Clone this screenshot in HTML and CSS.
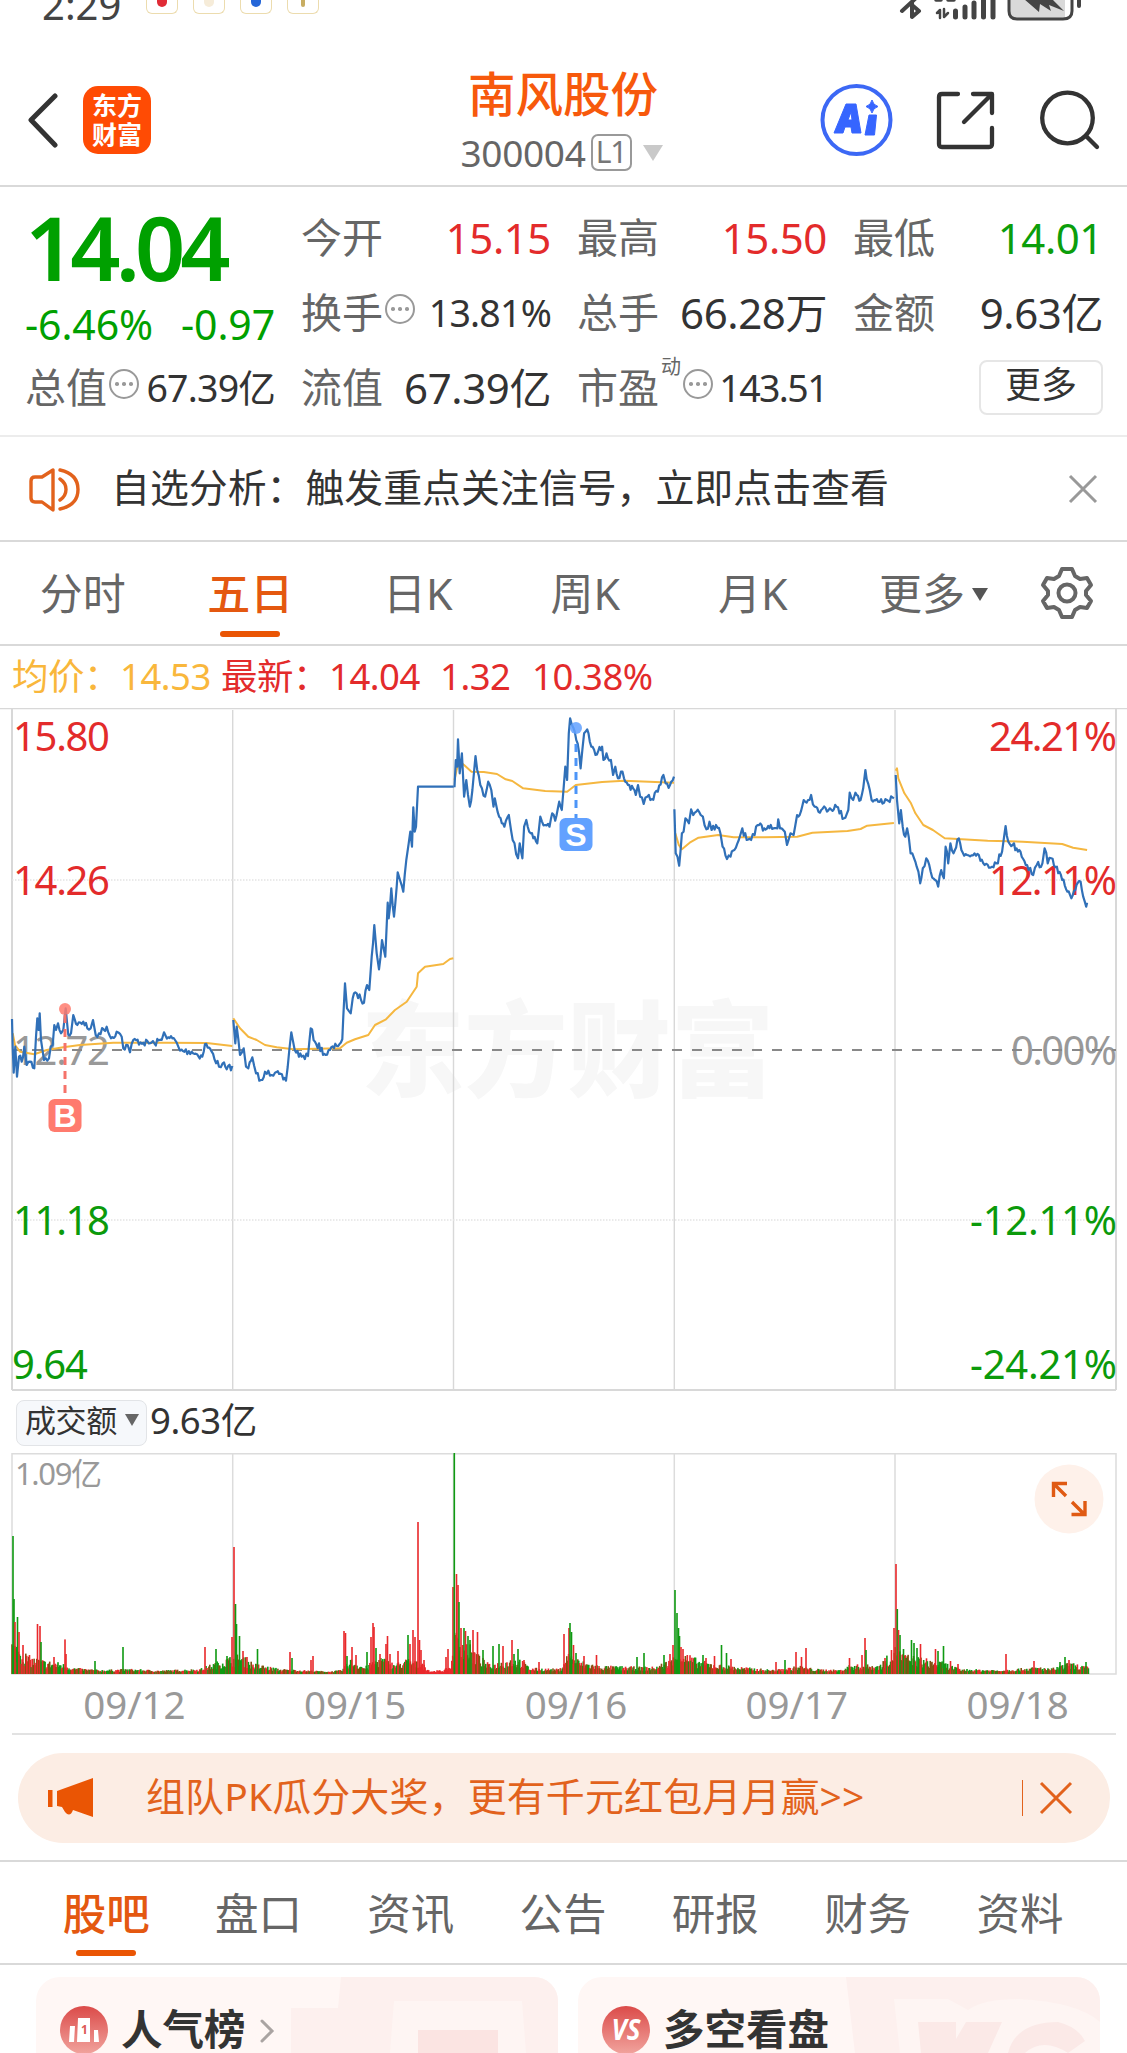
FILE: index.html
```html
<!DOCTYPE html>
<html lang="zh-CN">
<head>
<meta charset="utf-8">
<title>南风股份 300004</title>
<link rel="stylesheet" href="styles.css">
</head>
<body>
<div class="status">
  <span class="clock">2:29</span>
  <span class="notes"><i class="note red"></i><i class="note pale"></i><i class="note blue"></i><i class="note gold"></i></span>
  <svg class="status-icons" width="190" height="24" viewBox="895 0 190 24">
    <g fill="none" stroke="#444" stroke-width="4" stroke-linecap="round" stroke-linejoin="round">
      <path d="M902 11l14-13M912 5l7 6-7 6V3"/>
      <path d="M936 0h5M948 0h6" stroke-width="3.500"/>
      <path d="M940 18V10l-3 3M944 9v8l4-4" stroke-width="2.500"/>
      <path d="M955.500 17v-6M965 17V7M974 17V3M983.500 17v-20M993 17v-20" stroke-width="5"/>
    </g>
    <path d="M1009-5h56v24h-50q-6 0-6-6z" fill="#d9d9d9"/>
    <path d="M1009-6v17q0 8 8 8h46q9 0 9-8V-6" fill="none" stroke="#444" stroke-width="3"/>
    <path d="M1024-1h28l12 12-15-6 2 6-11-7-1 8z" fill="#444"/>
    <path d="M1079-3v9" stroke="#444" stroke-width="4" stroke-linecap="round"/>
  </svg>
</div>

<header class="header">
  <div class="header-left">
    <svg width="32" height="56" viewBox="0 0 32 56"><path d="M28 4L4 28l24 25" fill="none" stroke="#333" stroke-width="5" stroke-linecap="round" stroke-linejoin="round"/></svg>
    <span class="logo">东方<br>财富</span>
  </div>
  <div class="title">
    <h1>南风股份</h1>
    <p><span class="code">300004</span><span class="level">L1</span><i class="caret"></i></p>
  </div>
  <div class="header-right">
    <svg width="74" height="74" viewBox="819 82 74 74">
      <circle cx="856.500" cy="119" r="34" fill="none" stroke="#3c68f5" stroke-width="4"/>
      <path d="M846 103h10l5 29h-9l-1-6h-6l-2 6h-9zM848 119h4l-1-8zM869 114h7.500l-2 20H865zM872 99q1 5 6 6.500-5 1.500-6 6.500-1-5-6-6.500 5-1.500 6-6.500z" fill="#3665ff" fill-rule="evenodd" stroke="#3665ff" stroke-linejoin="round"/>
    </svg>
    <svg width="60" height="60" viewBox="935 89 60 60"><path d="M957 93h-16q-3 0-3 3v47q0 3 3 3h47q3 0 3-3v-16M972 93h19v19M990 94l-27 27" fill="none" stroke="#333" stroke-width="4.300" stroke-linecap="round" stroke-linejoin="round"/></svg>
    <svg width="62" height="62" viewBox="1038 88 62 62"><g fill="none" stroke="#333" stroke-width="4.300" stroke-linecap="round"><circle cx="1066.500" cy="117" r="25.300"/><path d="M1085 135l11 11"/></g></svg>
  </div>
</header>

<section class="quote">
  <div class="last">
    <strong>14.04</strong>
    <div class="change"><span>-6.46%</span><span>-0.97</span></div>
  </div>
  <div class="cell"><span class="label">今开</span><b class="up">15.15</b></div>
  <div class="cell"><span class="label">最高</span><b class="up">15.50</b></div>
  <div class="cell"><span class="label">最低</span><b class="down">14.01</b></div>
  <div class="cell"><span class="label">换手</span><i class="dots"></i><b class="small">13.81%</b></div>
  <div class="cell"><span class="label">总手</span><b>66.28万</b></div>
  <div class="cell"><span class="label">金额</span><b>9.63亿</b></div>
  <div class="cell first"><span class="label">总值</span><i class="dots"></i><b class="small">67.39亿</b></div>
  <div class="cell"><span class="label">流值</span><b>67.39亿</b></div>
  <div class="cell"><span class="label">市盈</span><sup>动</sup><i class="dots"></i><b class="small tight">143.51</b></div>
  <div class="cell"><button class="more">更多</button></div>
</section>

<section class="notice">
  <svg width="54" height="46" viewBox="28 465 54 46"><g fill="none" stroke="#e2621c" stroke-width="3.400" stroke-linejoin="round" stroke-linecap="round"><path d="M53 469v40l-11-8h-7q-4 0-4-4v-17q0-4 4-4h7z"/><path d="M60 478q6 4 6 10.500t-6 10.500M60 469q18 4 18 19.500T60 508"/></g></svg>
  <p>自选分析：触发重点关注信号，立即点击查看</p>
  <svg width="32" height="32" viewBox="0 0 32 32"><path d="M3 3l26 26M29 3L3 29" stroke="#999" stroke-width="3"/></svg>
</section>

<nav class="periods">
  <span>分时</span><span class="on">五日</span><span>日K</span><span>周K</span><span>月K</span><span class="drop">更多<i></i></span>
  <svg width="54" height="54" viewBox="-27 -27 54 54"><g fill="none" stroke="#666" stroke-width="4" stroke-linejoin="round"><path d="M-5-24H5L8-17 13-14 20-15 24-8 19-2V2L24 8 20 15 13 14 8 17 5 24H-5L-8 17-13 14-20 15-24 8-19 2V-2L-24-8-20-15-13-14-8-17Z"/><circle r="8.500"/></g></svg>
</nav>

<div class="summary"><span class="avg">均价：</span><span class="avg n1">14.53</span><span>最新：</span><span class="n2">14.04</span><span class="n3">1.32</span><span class="n4">10.38%</span></div>

<svg class="price" width="1127" height="684" viewBox="0 0 1127 684">
  <text class="watermark" x="361" y="381" textLength="413" lengthAdjust="spacingAndGlyphs">东方财富</text>
  <g stroke="#d8d8d8" stroke-width="2" fill="none">
    <path d="M0 .5H1127" stroke-width="1.500"/>
    <path d="M12 1V682M1116 1V682M12 682H1116" />
    <path d="M232.700 2V682M453.500 2V682M674.300 2V682M895 2V682" stroke-width="1.400"/>
    <path d="M12 172H1116M12 512H1116" stroke="#e4e4e4" stroke-width="1.300" stroke-dasharray="1.500 1.500"/>
  </g>
  <g class="axis">
    <g class="rise"><text x="13" y="43" textLength="97">15.80</text><text x="13" y="187" textLength="97">14.26</text></g>
    <text x="13" y="357" textLength="97">12.72</text>
    <g class="fall"><text x="13" y="527" textLength="97">11.18</text><text x="12" y="671" textLength="76">9.64</text></g>
    <g class="rise"><text x="989" y="43" textLength="128">24.21%</text><text x="989" y="187" textLength="128">12.11%</text></g>
    <text x="1011" y="357" textLength="106">0.00%</text>
    <g class="fall"><text x="970" y="527" textLength="147">-12.11%</text><text x="970" y="671" textLength="147">-24.21%</text></g>
  </g>
  <path d="M12 342H1116" stroke="#888" stroke-width="2" stroke-dasharray="10 10"/>
  <g id="averages" fill="none" stroke="#f5b740" stroke-width="2" stroke-linejoin="round"></g>
  <g id="prices" fill="none" stroke="#3070b8" stroke-width="2.200" stroke-linejoin="round"></g>
  <g class="mark-buy">
    <circle cx="65" cy="301" r="6" opacity=".85"/><path d="M65 307V390" stroke-width="3" stroke-dasharray="8 6"/>
    <rect x="48.500" y="391" width="33" height="33" rx="6"/><text x="65" y="419">B</text>
  </g>
  <g class="mark-sell">
    <circle cx="576" cy="20" r="6" opacity=".85"/><path d="M576 36V110" stroke-width="3" stroke-dasharray="8 6"/>
    <rect x="559.500" y="110" width="33" height="33" rx="6"/><text x="576" y="138">S</text>
  </g>
</svg>

<div class="turnover"><span class="picker">成交额<i></i></span><span>9.63亿</span></div>

<div class="volume">
  <svg width="1127" height="224" viewBox="0 0 1127 224">
    <path d="M12 .7H1116V221H12ZM232.700 1V221M453.500 1V221M674.300 1V221M895 1V221" fill="none" stroke="#dcdcdc" stroke-width="1.500"/>
    <text class="peak" x="15" y="32" textLength="87">1.09亿</text>
    <g id="bars"></g>
  </svg>
  <svg class="expand" width="70" height="70" viewBox="0 0 70 70"><circle cx="35" cy="35" r="34.500" fill="#fef1ea"/><path d="M19.500 33V19.500H33M20 20l12 12M51 37v13.500H37.500M50 50L38 38" fill="none" stroke="#e05a13" stroke-width="3.400"/></svg>
</div>
<div class="dates"><span>09/12</span><span>09/15</span><span>09/16</span><span>09/17</span><span>09/18</span></div>

<div class="promo">
  <svg width="48" height="42" viewBox="0 0 48 42"><path d="M0 13h4.500v17H0zM9 14L45 1v39L25 33q-3 8-8 2l-3-5-5-1z" fill="#ea5504"/></svg>
  <p>组队PK瓜分大奖，更有千元红包月月赢&gt;&gt;</p>
  <i></i>
  <svg class="close" width="34" height="34" viewBox="0 0 34 34"><path d="M2 2l30 30M32 2L2 32" stroke="#e2621c" stroke-width="3"/></svg>
</div>

<nav class="sections"><span class="on">股吧</span><span>盘口</span><span>资讯</span><span>公告</span><span>研报</span><span>财务</span><span>资料</span></nav>

<div class="cards">
  <div class="card">
    <svg class="card-art" width="522" height="76" viewBox="0 0 522 76"><path d="M305 0H522V76H255V31H302Z" fill="#fdf0ee"/><path d="M358 24H486L490 76H354Z" fill="#fef5f3"/><path d="M382 53H462V76H382Z" fill="#fbe4e2"/></svg>
    <svg class="badge" width="48" height="48" viewBox="0 0 48 48"><circle cx="24" cy="24" r="24" fill="url(#glow)"/><path d="M10 20h5l-1 16H9zM18 12h12v24H17zM34 24h4l1 12h-5z" fill="#fff"/><text x="21" y="28" class="one">1</text></svg>
    <h2>人气榜</h2>
    <svg class="arrow" width="16" height="26" viewBox="0 0 16 26"><path d="M3 3l10 10L3 23" fill="none" stroke="#aaa4a2" stroke-width="3" stroke-linecap="round"/></svg>
  </div>
  <div class="card">
    <svg class="card-art" width="522" height="76" viewBox="0 0 522 76"><path d="M268 0H522V76H277Z" fill="#fdf0ee"/><path d="M316 22H370L390 33Q405 22 440 22 500 25 522 45V76H322Z" fill="#fef5f3"/><path d="M340 45H378V62L388 45H424L410 76H343ZM430 76Q438 45 480 45 500 50 507 64L490 76Q465 60 447 76Z" fill="#fbe9e7"/></svg>
    <svg class="badge" width="48" height="48" viewBox="0 0 48 48"><circle cx="24" cy="24" r="24" fill="url(#glow)"/><text x="24" y="34" class="vs" textLength="29" lengthAdjust="spacingAndGlyphs">VS</text></svg>
    <h2>多空看盘</h2>
  </div>
</div>
<svg class="defs" width="0" height="0"><linearGradient id="glow" x1="0" y1="0" x2="0" y2="1"><stop offset="0" stop-color="#db4b49"/><stop offset="1" stop-color="#f1a39d"/></linearGradient></svg>
<script src="chart.js"></script>
</body>
</html>
```
FILE: styles.css
```css
* { box-sizing: border-box; margin: 0; padding: 0; }
body { width: 1127px; height: 2053px; overflow: hidden; background: #fff; color: #333; font-family: "Noto Sans", "Noto Sans CJK SC", sans-serif; }
svg { display: block; flex: none; }
i { font-style: normal; }
b { font-weight: 400; }

.status { height: 60px; display: flex; }
.clock { width: 104px; margin-left: 42px; font-size: 40px; line-height: 10px; color: #444; white-space: nowrap; }
.notes { display: flex; gap: 15px; }
.note { width: 32px; height: 14px; border: 1.5px solid #ecdcae; border-top: 0; border-radius: 0 0 6px 6px; display: flex; justify-content: center; }
.notes { flex: none; }
.note::before { content: ""; width: 10px; height: 7px; border-radius: 0 0 5px 5px; background: #f6ecd9; }
.note.red::before { background: #e02b36; }
.note.blue::before { background: #2566d8; }
.note.gold::before { width: 4px; background: #c8ad62; }
.status-icons { margin-left: auto; margin-right: 42px; }

.header { height: 127px; display: flex; border-bottom: 2px solid #d9d9d9; }
.header-left { width: 400px; height: 119px; padding-left: 27px; display: flex; align-items: center; gap: 24px; }
.logo { width: 68px; height: 68px; border-radius: 15px; background: #ff4b04; color: #fff; font: 700 25px/29px "Noto Sans CJK SC", sans-serif; text-align: center; padding-top: 4px; }
.title { width: 326px; text-align: center; }
.title h1 { font-size: 47.5px; font-weight: 500; line-height: 66px; color: #f7590c; padding-top: 1px; }
.title p { height: 50px; display: flex; align-items: center; justify-content: center; padding: 1px 3px 0 0; }
.code { font-size: 37px; color: #666; letter-spacing: -.3px; }
.level { height: 37px; width: 41px; margin-left: 5px; border: 2px solid #999; border-radius: 7px; font-size: 30px; line-height: 32px; color: #777; letter-spacing: -1px; }
.caret { margin-left: 11px; border: 10.5px solid transparent; border-top: 16px solid #c9c9c9; border-bottom: 0; }
.header-right { height: 119px; margin-left: 93px; display: flex; align-items: center; gap: 43px; }

.quote { height: 250px; padding: 13px 23px 0 25px; display: grid; grid-template: repeat(3, 75px) / 250px 250px 250px 250px; column-gap: 26px; border-bottom: 2px solid #ececec; }
.last { grid-row: span 2; color: #00a000; }
.last strong { display: block; font-size: 88px; font-weight: 600; line-height: 94px; letter-spacing: -5px; }
.change { display: flex; justify-content: space-between; font-size: 41px; line-height: 60px; letter-spacing: -.1px; }
.cell { display: flex; align-items: center; justify-content: space-between; font-size: 42px; line-height: 75px; white-space: nowrap; }
.label { font-size: 41px; color: #666; }
.cell b { letter-spacing: -.4px; }
.cell b.small { font-size: 37.5px; letter-spacing: -.8px; margin-left: auto; }
.cell b.tight { letter-spacing: -1.6px; }
.up { color: #e32b2b; }
.down { color: #0b9e0b; }
.dots { width: 30px; height: 30px; margin: -7px 0 0 2px; border: 2.5px solid #999; border-radius: 50%; display: flex; align-items: center; justify-content: center; }
.dots::before { content: ""; width: 3.5px; height: 3.5px; border-radius: 50%; background: #999; box-shadow: -7px 0 #999, 7px 0 #999; }
.cell sup { align-self: start; font-size: 20px; line-height: 34px; color: #666; margin-left: 2px; }
.more { margin-left: auto; width: 124px; height: 55px; background: #fff; border: 2px solid #e6e6e6; border-radius: 8px; font: 36px/46px "Noto Sans", "Noto Sans CJK SC", sans-serif; color: #333; padding-bottom: 5px; }

.notice { height: 105px; padding: 0 28px; display: flex; align-items: center; border-bottom: 2px solid #d9d9d9; }
.notice p { margin: -4px 0 0 29px; font-size: 38.9px; line-height: 60px; flex: 1; }

.periods { height: 104px; display: flex; align-items: center; border-bottom: 2px solid #d9d9d9; font-size: 43px; line-height: 102px; color: #666; }
.periods span { width: 167.5px; height: 102px; padding-top: 2px; line-height: 100px; text-align: center; position: relative; left: -1px; }
.periods .drop { width: 202px; display: flex; align-items: center; justify-content: center; gap: 7px; padding-right: 8px; }
.drop i { border: 8px solid transparent; border-top: 13px solid #555; border-bottom: 0; }
.on { color: #e45810; font-weight: 500; }
.on::after { content: ""; position: absolute; left: 50%; bottom: 7px; width: 60px; height: 6px; margin-left: -30px; border-radius: 3px; background: #ea5504; }

.summary { height: 62px; padding-left: 12px; font-size: 36.5px; line-height: 61px; color: #e32b2b; display: flex; letter-spacing: -.5px; white-space: nowrap; }
.summary .avg { color: #f9b73c; }
.summary span { width: 108px; }
.summary .n1 { width: 101px; }
.summary .n2 { width: 111px; }
.summary .n3 { width: 92px; }

.watermark { font: 900 104px "Noto Sans CJK SC", sans-serif; fill: #f7f7f7; }
.axis { font-size: 40px; fill: #999; }
.rise { fill: #e32b2b; }
.fall { fill: #0b9a0b; }
.mark-buy, .mark-sell { font: 700 32px "Liberation Sans", sans-serif; text-anchor: middle; }
.mark-buy { fill: #ff7b6e; }
.mark-buy path { stroke: #f5736a; }
.mark-sell { fill: #62a1ff; }
.mark-sell path { stroke: #4d95f8; }
.mark-buy text, .mark-sell text { fill: #fff; }

.turnover { height: 61px; padding-left: 16px; display: flex; align-items: center; font-size: 36.5px; line-height: 50px; letter-spacing: -.4px; }
.turnover > span:last-child { padding-bottom: 6px; }
.picker { width: 131px; height: 46px; margin-right: 3px; padding: 0 0 5px 8px; display: flex; align-items: center; gap: 8px; background: #f6f8fb; border: 1.5px solid #e2e4e7; border-radius: 8px; font-size: 31px; }
.picker i { border: 7px solid transparent; border-top: 12px solid #666; border-bottom: 0; }

.volume { position: relative; }
.expand { position: absolute; right: 23px; top: 11px; }
.peak { font-size: 31px; fill: #999; }
.dates { height: 58px; margin: 0 11px 0 12px; padding-left: 12px; display: flex; border-bottom: 2px solid #e2e2e2; color: #999; font-size: 38.5px; line-height: 54px; }
.dates span { width: 220.8px; flex: none; text-align: center; }

.promo { height: 90px; margin: 18px 17px 17px 18px; padding: 0 37px 0 30px; display: flex; align-items: center; border-radius: 45px; background: #fcede4; color: #e2621c; font-size: 39px; }
.promo p { flex: 1; margin-left: 50px; line-height: 86px; padding-bottom: 4px; white-space: nowrap; letter-spacing: .1px; }
.promo i { width: 1.5px; height: 36px; background: #e2621c; margin-right: 16px; }

.sections { height: 105px; padding-left: 30px; display: flex; border: solid #d9d9d9; border-width: 2px 0; font-size: 43.5px; line-height: 102px; color: #666; }
.sections span { width: 152.3px; text-align: center; position: relative; }
.sections .on { color: #e45810; }

.cards { height: 88px; padding: 12px 27px 0 36px; display: flex; gap: 20px; overflow: hidden; }
.card { position: relative; width: 522px; height: 140px; border-radius: 24px; background: #fff7f5; overflow: hidden; padding: 29px 24px; display: flex; align-items: flex-start; }
.card-art { position: absolute; left: 0; top: 0; }
.badge, .card h2, .arrow { position: relative; }
.card h2 { margin-left: 13px; font-size: 41.5px; font-weight: 700; line-height: 46px; white-space: nowrap; }
.arrow { margin: 12px 0 0 13px; }
.one { font: 700 12px "Noto Sans", sans-serif; fill: #dd5a56; }
.vs { font: italic 700 28px "Noto Sans", sans-serif; fill: #fff; text-anchor: middle; }
.defs { position: absolute; }
```
FILE: chart.js
```js
const NS = 'http://www.w3.org/2000/svg';
let seed = 7;
const rnd = () => (seed = (seed * 16807) % 2147483647) / 2147483647;

// Each session is a list of x,y samples on its own plotting scale.
const early = p => [p[0] / 3, p[1] / 3 - 8];
const late = p => [440 + p[0] / 2.2824, p[1] / 3 - 8];
const parse = s => s.trim().split(/\s+/).map(v => v.split(',').map(Number));

const prices = [
  [early, '36,957 38,1040 41,1118 46,1040 51,1130 57,1070 65,1085 73,1040 80,1095 90,1085 103,1105 108,1010 112,955 116,990 119,940 123,1020 132,1080 147,1075 152,1040 158,1035 163,975 168,990 174,970 183,1000 190,990 197,925 205,1005 213,1000 220,945 232,975 250,965 262,985 272,985 279,960 287,1005 297,1000 320,980 333,1015 350,995 365,1010 370,1045 383,1035 390,1057 400,1020 430,1028 463,1030 485,1020 492,997 505,1012 525,1020 540,1052 575,1055 607,1070 615,1032 635,1055 657,1100 668,1090 680,1108 697,1098'],
  [early, '700,960 706,1030 710,980 720,1065 731,1045 738,1100 745,1105 757,1072 768,1120 783,1140 795,1115 805,1112 815,1125 825,1118 858,1142 868,1050 874,997 884,1050 905,1070 924,1068 932,985 945,1025 977,1065 990,1050 1010,1038 1027,1018 1030,950 1035,850 1041,925 1052,940 1058,895 1070,880 1092,908 1101,855 1108,870 1115,770 1123,675 1130,760 1137,808 1146,720 1150,740 1156,770 1163,608 1166,655 1174,565 1182,650 1190,560 1193,517 1200,540 1210,575 1219,480 1226,430 1231,395 1236,440 1240,322 1244,395 1248,380 1254,260 1361,260'],
  [late, '33,262 36,180 39,200 41,118 45,220 50,160 55,290 60,240 68,320 74,270 81,168 85,210 92,255 103,290 110,245 117,270 122,320 125,295 135,350 147,380 157,345 162,390 170,430 178,475 182,430 188,475 192,380 197,360 207,400 222,430 229,350 240,375 250,380 256,340 263,362 272,305 278,330 286,200 290,240 294,100 297,55 305,85 314,130 321,205 329,100 336,88 342,125 355,165 370,140 373,180 380,160 390,180 395,225 400,200 406,235 413,215 420,235 432,255 447,285 452,255 457,290 465,312 473,290 480,300 497,275 510,225 515,250 525,255 534,230'],
  [late, '535,328 538,460 542,470 546,497 552,400 556,395 560,355 568,370 573,328 578,345 585,335 595,345 600,350 608,388 615,365 620,390 630,375 640,400 645,440 655,477 663,470 672,450 682,420 690,385 700,420 710,420 718,405 725,375 740,385 755,375 770,385 772,358 776,385 787,395 792,435 800,400 807,405 815,345 821,345 830,300 840,300 847,285 855,320 870,330 890,325 905,320 922,355 932,330 935,278 943,300 948,278 960,300 966,265 971,210 977,250 985,300 1000,305 1020,300 1036,295'],
  [late, '1040,225 1043,300 1048,370 1052,330 1056,380 1062,410 1066,385 1074,460 1082,475 1088,500 1096,550 1102,505 1110,475 1120,515 1130,540 1137,560 1144,510 1150,535 1154,440 1160,490 1165,430 1172,460 1184,415 1190,450 1203,465 1220,460 1240,490 1253,503 1270,490 1283,455 1291,378 1297,425 1307,435 1325,455 1340,495 1354,525 1362,495 1375,490 1380,445 1387,490 1395,475 1408,500 1420,540 1432,575 1441,595 1450,570 1462,545 1468,590 1475,620 1477,608']
];
const averages = [
  [early, '38,1000 45,1035 60,1055 103,1063 140,1050 190,1042 240,1035 340,1028 500,1028 620,1029 697,1038'],
  [early, '700,955 720,985 745,1010 770,1020 795,1035 830,1042 880,1048 1020,1045 1040,1028 1065,1018 1105,1005 1125,975 1158,958 1185,930 1220,905 1250,860 1254,820 1275,800 1330,792 1350,777 1360,775'],
  [late, '33,240 38,210 45,185 55,195 72,215 100,216 130,222 150,238 165,243 190,265 240,273 290,275 310,255 370,246 420,242 534,248'],
  [late, '537,400 545,435 552,448 570,428 590,413 635,405 670,412 740,412 815,410 850,398 930,393 960,387 975,377 1036,369'],
  [late, '1040,212 1043,205 1046,235 1060,280 1075,310 1085,340 1103,375 1125,390 1152,415 1250,422 1330,425 1420,432 1445,443 1477,450']
];

function draw(id, sessions, jitter) {
  for (const [scale, text] of sessions) {
    const pts = parse(text).map(scale), out = [pts[0]];
    for (let i = 1; i < pts.length; i++) {
      const [x0, y0] = pts[i - 1], [x1, y1] = pts[i];
      const flat = y0 === y1 && x1 - x0 > 20;
      const n = jitter && !flat ? Math.floor((x1 - x0) / 1.3) : 0;
      for (let k = 1; k < n; k++) out.push([x0 + (x1 - x0) * k / n, y0 + (y1 - y0) * k / n + (rnd() - .5) * jitter]);
      out.push([x1, y1]);
    }
    const line = document.createElementNS(NS, 'polyline');
    line.setAttribute('points', out.map(p => p.map(v => v.toFixed(1)).join()).join(' '));
    document.getElementById(id).append(line);
  }
}
draw('averages', averages, 0);
draw('prices', prices, 7);

// Volume: typical bar height along the axis, then the bars that stand out.
const level = parse('12,32 20,24 30,16 45,12 60,10 75,5 100,3 130,4 160,2.5 200,4 225,14 232,16 240,18 255,9 280,4 300,3 330,1.5 342,3 350,14 365,6 380,16 395,9 408,14 425,8 430,2 444,3 451,8 456,40 465,32 478,18 490,8 510,14 520,14 530,5 560,4 568,20 580,12 600,7 640,6 655,6 672,14 680,22 700,12 720,8 750,5 775,3 800,7 815,4 840,3 850,8 880,8 895,25 905,18 925,14 945,10 960,4 1000,3 1040,6 1050,4 1070,10 1089,6');
const peaks = '13,138,g 14,75,g 15,52,r 17.5,57,g 19,42,r 23,29,r 37.5,50,r 40,48,r 41,32,g 54,17,r 65,34.6,r 66,20,r 95,13,g 123,27,g 205,27,r 216,25,g 227,18,g 232,37,r 234,127,r 235.5,70,g 236.5,50,g 239.5,38,g 243,23,r 247,17,r 257.5,25,g 290,22,r 292,16,g 311,14,r 313,18,r 344,43,r 345.5,41,r 347,18,g 352,27,r 356,19,r 367,22,g 371,37,r 373,51,r 374,47,r 376,26,g 380,20,r 386,30,r 387.5,38,r 390,20,r 398,23,r 408,39,g 410,30,r 413,44,r 415,37,r 418,152,r 419.5,34,r 421,24,r 424,14,r 446,17,r 448,25,r 453,87,r 454.3,221,g 456.5,100,r 458,89,r 459,72,g 461,46,r 464,46,g 465.5,43,r 468,38,g 470,34,g 473,44,r 477.5,42,r 483,24,g 493,28,g 499,30,g 503,28,r 512,34,r 514,20,g 518,25,g 524,14,r 539,12,r 564,40,r 569,46,r 570,51,g 571.5,42,g 573.5,29,r 576,21,g 584,18,r 596.5,19,r 637,17,g 644,21,g 664,19,g 670,20,r 673,29,r 675,84,g 677,61,g 678.5,46,g 679.5,38,g 681,27,r 683,25,r 703,19,g 706,16,r 714.5,18,r 721.5,29,g 726.5,21,g 731,15,r 776,12,r 785,14,g 796,22,r 801.5,17,r 806,26,r 849.5,16,r 862,19,r 865,36,r 866,24,g 885,16,r 891.5,24,r 894,46,r 896,110,r 897.3,65,g 898.5,44,r 900,39,g 903.5,25,g 911.5,34,g 914,31,g 917,26,g 920.5,30,r 935.5,25,r 938,23,g 943.5,28,g 950.5,13,r 958,10,r 1006,20,r 1034,13,r 1060,12,g 1065,17,g 1069,14,r 1086,12,g';
const colors = { g: '#0f9a12', r: '#e9282b', m: '#80520f' };
const bars = document.getElementById('bars');
function bar(x, h, c) {
  const r = document.createElementNS(NS, 'rect');
  r.setAttribute('x', (x - .8).toFixed(1));
  r.setAttribute('y', (221 - h).toFixed(1));
  r.setAttribute('width', 1.6);
  r.setAttribute('height', h.toFixed(1));
  r.setAttribute('fill', colors[c]);
  bars.append(r);
}
for (let x = 12, i = 0; x < 1089; x += .92) {
  while (level[i + 1] && level[i + 1][0] < x) i++;
  const [x0, h0] = level[i], [x1, h1] = level[i + 1] || level[i];
  const h = h0 + (h1 - h0) * (x - x0) / (x1 - x0 || 1);
  const c = x > 418 && x < 453 ? 'r' : 'rgm'[Math.floor(rnd() * 3)];
  bar(x, h * (.35 + rnd() * .75) + 1, c);
}
for (const p of peaks.split(' ')) {
  const [x, h, c] = p.split(',');
  bar(+x, +h, c);
}
```
